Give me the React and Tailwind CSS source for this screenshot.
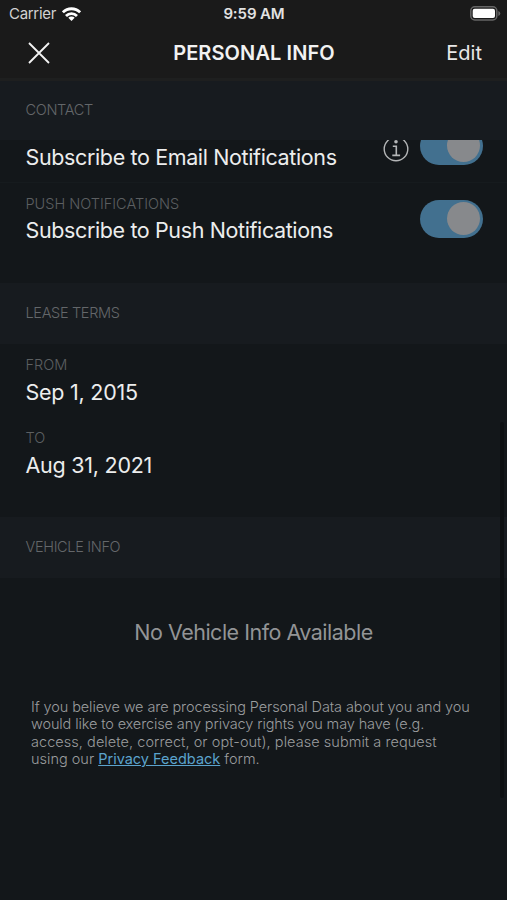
function SectionHeader({ title }) {
  return (
    <h2 className="flex h-[61px] shrink-0 items-center bg-[#171b1f] px-[25.5px] pb-[2px] text-[14.5px] font-light tracking-[-0.33px] text-[#64676a]">
      {title}
    </h2>
  )
}

function Toggle() {
  return (
    <span className="flex h-[38px] w-[63px] items-center justify-end rounded-full bg-[#42708f] pr-[3px]">
      <span className="size-[33px] rounded-full bg-[#87898c]" />
    </span>
  )
}

function Field({ label, value, tight }) {
  return (
    <div className="h-[73px] pl-[25.5px] pt-[12px]">
      <p className="text-[14.5px] font-light leading-[18px] text-[#5c5f61]">{label}</p>
      <p className={`text-[21.5px] leading-[27px] text-[#eceded] ${tight ? 'mt-[4px] tracking-[-0.38px]' : 'mt-[5px] tracking-[-0.25px]'}`}>
        {value}
      </p>
    </div>
  )
}

function InfoIcon() {
  return (
    <svg className="size-[26px]" viewBox="0 0 26 26" fill="none" stroke="#b4b6b7" strokeWidth="1.4">
      <circle cx="13" cy="13" r="11.8" />
      <circle cx="13" cy="5.8" r="1.8" fill="#b4b6b7" stroke="none" />
      <path d="M9.8 10.3h3.5v8.9M9.3 19.4h7.8" strokeWidth="1.6" />
    </svg>
  )
}

function StatusBar() {
  return (
    <div className="grid h-[27px] grid-cols-3 items-center pl-[9px] pr-[6px] text-[15px]">
      <div className="flex items-center gap-[6px] pt-[2px] text-[#d2d2d2]">
        <span className="tracking-[-0.3px]">Carrier</span>
        <svg className="-mt-[2px] h-[14px] w-[19px]" viewBox="0 0 19 14" fill="none" stroke="#fff" strokeWidth="2.8">
          <path d="M.9 5.3a12.2 12.2 0 0 1 17.2 0M4 8.9a7.8 7.8 0 0 1 11 0" />
          <path d="M9.5 14 6.3 10.8a4.6 4.6 0 0 1 6.4 0Z" fill="#fff" stroke="none" />
        </svg>
      </div>
      <span className="pr-[2px] pt-[2px] text-center font-semibold tracking-[-0.1px] text-[#e2e2e2]">9:59 AM</span>
      <svg className="h-[15px] w-[31px] justify-self-end" viewBox="0 0 31 15">
        <rect x=".8" y=".8" width="26" height="13.2" rx="4" fill="none" stroke="#666" strokeWidth="1.5" />
        <rect x="2.7" y="2.7" width="22.3" height="9.4" rx="2" fill="#fff" />
        <path d="M28.3 5v5q2-.8 2-2.5t-2-2.5Z" fill="#666" />
      </svg>
    </div>
  )
}

export default function App() {
  return (
    <div className="relative flex h-[900px] w-[507px] flex-col overflow-hidden whitespace-nowrap bg-[#13171a] font-[Inter,sans-serif]">
      <header className="h-[81px] shrink-0 border-b-3 border-[#1e1f1f] bg-[#1a1a1a]">
        <StatusBar />
        <div className="grid h-[51px] grid-cols-[90px_1fr_90px] items-center px-[25px]">
          <svg className="ml-[3px] size-[22px]" viewBox="0 0 22 22" stroke="#f4f4f4" strokeWidth="1.8">
            <path d="m1 1 20 20M21 1 1 21" />
          </svg>
          <h1 className="pl-px text-center text-[20px] font-semibold tracking-[0.1px] text-[#f2f2f2]">PERSONAL INFO</h1>
          <span className="text-right text-[20px] text-[#e8e8e8]">Edit</span>
        </div>
      </header>

      <div className="flex h-[59px] shrink-0 flex-col justify-center overflow-hidden">
        <SectionHeader title="CONTACT" />
      </div>

      <div className="flex h-[43px] shrink-0 justify-between overflow-hidden border-b border-[#161b1e] pl-[25.5px] pr-[24px]">
        <p className="mt-[4px] text-[21.5px] leading-[27px] tracking-[-0.37px] text-[#eceded]">Subscribe to Email Notifications</p>
        <div className="-mt-[13.5px] flex items-start gap-[11px]">
          <div className="mt-[9px]">
            <InfoIcon />
          </div>
          <Toggle />
        </div>
      </div>

      <div className="flex h-[100px] shrink-0 justify-between pr-[24px]">
        <Field label="PUSH NOTIFICATIONS" value="Subscribe to Push Notifications" tight />
        <div className="mt-[16.5px]">
          <Toggle />
        </div>
      </div>

      <SectionHeader title="LEASE TERMS" />
      <div className="h-[173px] shrink-0">
        <Field label="FROM" value="Sep 1, 2015" />
        <Field label="TO" value="Aug 31, 2021" />
      </div>

      <SectionHeader title="VEHICLE INFO" />
      <p className="mt-[40px] text-center text-[21.5px] leading-[28px] tracking-[-0.5px] text-[#929496]">
        No Vehicle Info Available
      </p>

      <div className="ml-[31px] mt-[51.5px] text-[14.5px] font-light leading-[17.6px] text-[#9a9c9e]">
        <p className="tracking-[-0.1px]">If you believe we are processing Personal Data about you and you</p>
        <p className="tracking-[-0.12px]">would like to exercise any privacy rights you may have (e.g.</p>
        <p className="tracking-[0.05px]">access, delete, correct, or opt-out), please submit a request</p>
        <p>
          using our <span className="font-normal text-[#5ba3cd] underline">Privacy Feedback</span> form.
        </p>
      </div>

      {/* scroll indicator */}
      <div className="absolute right-[3px] top-[422px] h-[376px] w-[4px] rounded-full bg-[#0d1012]" />
    </div>
  )
}
